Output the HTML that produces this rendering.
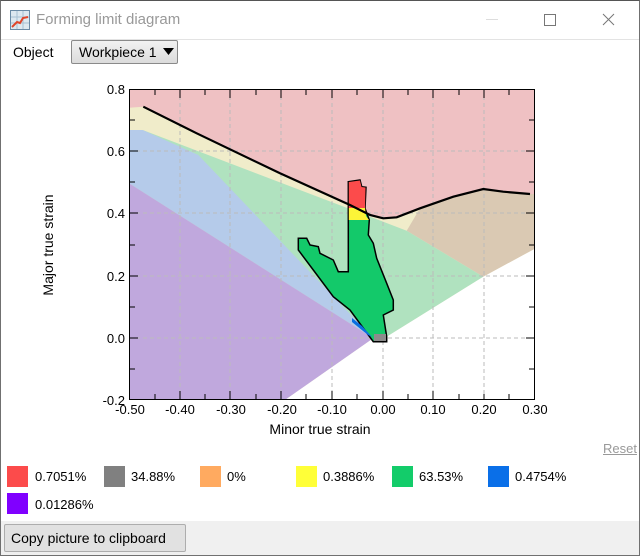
<!DOCTYPE html>
<html><head><meta charset="utf-8"><style>
body{margin:0;width:640px;height:556px;overflow:hidden;background:#fff;font-family:"Liberation Sans",sans-serif;font-size:13px;color:#000;position:relative}
.abs{position:absolute}
.sw{position:absolute;width:21px;height:21px}
.lt{position:absolute;font-size:13px}
</style></head><body>
<div class="abs" style="left:0;top:0;width:638px;height:554px;border:1px solid #707070;border-top:1px solid #555"></div>
<div class="abs" style="left:1px;top:39px;width:638px;height:1px;background:#e3e3e3"></div>
<svg class="abs" style="left:10px;top:10px" width="20" height="20" viewBox="0 0 20 20">
<rect x="0.5" y="0.5" width="19" height="19" fill="#dde8f0" stroke="#6a8aa5"/>
<path d="M1 7H19M1 13H19M7 1V19M13 1V19" stroke="#a8c0d2" stroke-width="1"/>
<path d="M2 17L7 12L10 13L13 8L18 7" stroke="#e0452a" stroke-width="2" fill="none"/></svg>
<div class="abs" style="left:36px;top:11px;font-size:15px;color:#999">Forming limit diagram</div>
<div class="abs" style="left:486px;top:19px;width:12px;height:1px;background:#ddd"></div>
<div class="abs" style="left:544px;top:14px;width:10px;height:10px;border:1px solid #777"></div>
<svg class="abs" style="left:602px;top:13px" width="13" height="13"><path d="M1 1L12 12M12 1L1 12" stroke="#777" stroke-width="1"/></svg>
<div class="abs" style="left:13px;top:44px;font-size:14px">Object</div>
<div class="abs" style="left:71px;top:40px;width:107px;height:24px;border:1px solid #8a8a8a;border-radius:2px;background:linear-gradient(#f2f2f2,#dcdcdc);box-sizing:border-box"></div>
<div class="abs" style="left:79px;top:44px;font-size:14px">Workpiece 1</div>
<svg class="abs" style="left:163px;top:48px" width="11" height="7"><path d="M0 0H11L5.5 7Z" fill="#000"/></svg>

<svg class="abs" style="left:0;top:0" width="640" height="556">
<defs><clipPath id="c"><rect x="129" y="89" width="406" height="311"/></clipPath></defs>
<g clip-path="url(#c)">
<rect x="129" y="89" width="406" height="311" fill="#efc1c3"/>
<polygon points="129,107.7 143.3,106.7 196.7,133.3 280,173.3 350,205 370,215 383.3,218.3 396.7,217.3 420,208.3 453.3,196.7 483.3,189 503.3,191.7 530,194 540,194 540,420 129,420" fill="#f0ecca"/>
<polygon points="406.7,230.7 420,208.3 453.3,196.7 483.3,189 503.3,191.7 530,194 540,194 540,246 483.3,276.7" fill="#dac9b3"/>
<polygon points="129,130 142.7,130 406.7,230.7 483.3,276.7 386.7,336.7 373.3,338.3 129,183.3" fill="#b0e2bf"/>
<polygon points="129,130 142.7,130 198.3,155 373.3,338.3 129,183.3" fill="#b5cbea"/>
<polygon points="129,183.3 373.3,338.3 285,400 129,400" fill="#c0a8dd"/>
<polygon points="386.7,336.7 483.3,276.7 540,246 540,400 285,400 373.3,338.3" fill="#fff"/>
<g stroke="#bbb" stroke-dasharray="4,3" stroke-width="1">
<path d="M180 89V400M230 89V400M281 89V400M332 89V400M383 89V400M433 89V400M484 89V400"/>
<path d="M129 151H535M129 213H535M129 276H535M129 338H535"/>
</g>
<polygon points="348.3,181.7 360,180 361.7,186.7 366,187.3 365,208.3 369.3,220 368.3,235 373.3,243.3 376.7,258.3 386.7,283.3 393.3,300 393.3,310 383.3,315 386.7,336.7 386.7,341.7 373.3,341.7 350,310 333.3,296.7 313.3,270 298.3,250 298.3,238.3 306.7,238.3 310,245 318.3,246.7 320,253.3 333.3,260 338.3,271.7 348.3,271.7" fill="#13c96a" stroke="#000" stroke-width="1.5"/>
<polygon points="348.8,182 360,180.5 361.5,187 365.5,187.5 365,208 348.8,208" fill="#fc4b4b"/>
<polygon points="348.8,208 365,208 366,216 369,220 348.8,220" fill="#fcf438"/>
<polygon points="352,318 362,326 372,337 368,335 352,322" fill="#0a6fe0"/>
<rect x="374" y="334" width="12" height="7" fill="#8c8c8c"/>
<polyline points="143.3,106.7 196.7,133.3 280,173.3 350,205 370,215 383.3,218.3 396.7,217.3 420,208.3 453.3,196.7 483.3,189 503.3,191.7 530,194" fill="none" stroke="#000" stroke-width="2.2"/>
</g>
<rect x="129.5" y="89.5" width="405" height="310" fill="none" stroke="#000" stroke-width="1"/>
<g stroke="#000" stroke-width="1">
<path d="M155 400v-6M180 400v-9M205 400v-6M230 400v-9M256 400v-6M281 400v-9M306 400v-6M332 400v-9M357 400v-6M383 400v-9M408 400v-6M433 400v-9M459 400v-6M484 400v-6M509 400v-6"/>
<path d="M129 120h6M129 151h9M129 182h6M129 213h9M129 245h6M129 276h9M129 307h6M129 338h9M129 369h6"/>
<path d="M535 120h-6M535 151h-9M535 182h-6M535 213h-9M535 245h-6M535 276h-9M535 307h-6M535 338h-9M535 369h-6"/>
<path d="M155 89v6M180 89v9M205 89v6M230 89v9M256 89v6M281 89v9M306 89v6M332 89v9M357 89v6M383 89v9M408 89v6M433 89v9M459 89v6M484 89v9M509 89v6"/>
</g>
<g font-family="Liberation Sans" font-size="13" fill="#000" text-anchor="end">
<text x="125" y="94">0.8</text><text x="125" y="156">0.6</text><text x="125" y="218">0.4</text><text x="125" y="281">0.2</text><text x="125" y="343">0.0</text><text x="125" y="405">-0.2</text>
</g>
<g font-family="Liberation Sans" font-size="13" fill="#000" text-anchor="middle">
<text x="130" y="414">-0.50</text><text x="180" y="414">-0.40</text><text x="231" y="414">-0.30</text><text x="282" y="414">-0.20</text><text x="332" y="414">-0.10</text><text x="383" y="414">0.00</text><text x="433" y="414">0.10</text><text x="484" y="414">0.20</text><text x="535" y="414">0.30</text>
<text x="320" y="434" font-size="14">Minor true strain</text>
<text transform="translate(53,245) rotate(-90)" font-size="14">Major true strain</text>
</g>
</svg>
<div class="abs" style="left:603px;top:441px;color:#999;text-decoration:underline;font-size:13px">Reset</div>
<div class="sw" style="left:7px;top:466px;background:#fc4b4b"></div><div class="lt" style="left:35px;top:469px">0.7051%</div>
<div class="sw" style="left:104px;top:466px;background:#808080"></div><div class="lt" style="left:131px;top:469px">34.88%</div>
<div class="sw" style="left:200px;top:466px;background:#ffaa60"></div><div class="lt" style="left:227px;top:469px">0%</div>
<div class="sw" style="left:296px;top:466px;background:#ffff38"></div><div class="lt" style="left:323px;top:469px">0.3886%</div>
<div class="sw" style="left:392px;top:466px;background:#13cc6a"></div><div class="lt" style="left:419px;top:469px">63.53%</div>
<div class="sw" style="left:488px;top:466px;background:#0a6fe8"></div><div class="lt" style="left:515px;top:469px">0.4754%</div>
<div class="sw" style="left:7px;top:493px;background:#8000ff"></div><div class="lt" style="left:35px;top:497px">0.01286%</div>
<div class="abs" style="left:1px;top:521px;width:638px;height:34px;background:#f0f0f0"></div>
<div class="abs" style="left:4px;top:524px;width:182px;height:28px;border:1px solid #adadad;border-radius:2px;background:#e1e1e1;box-sizing:border-box"></div>
<div class="abs" style="left:11px;top:530px;font-size:14px">Copy picture to clipboard</div>
</body></html>
